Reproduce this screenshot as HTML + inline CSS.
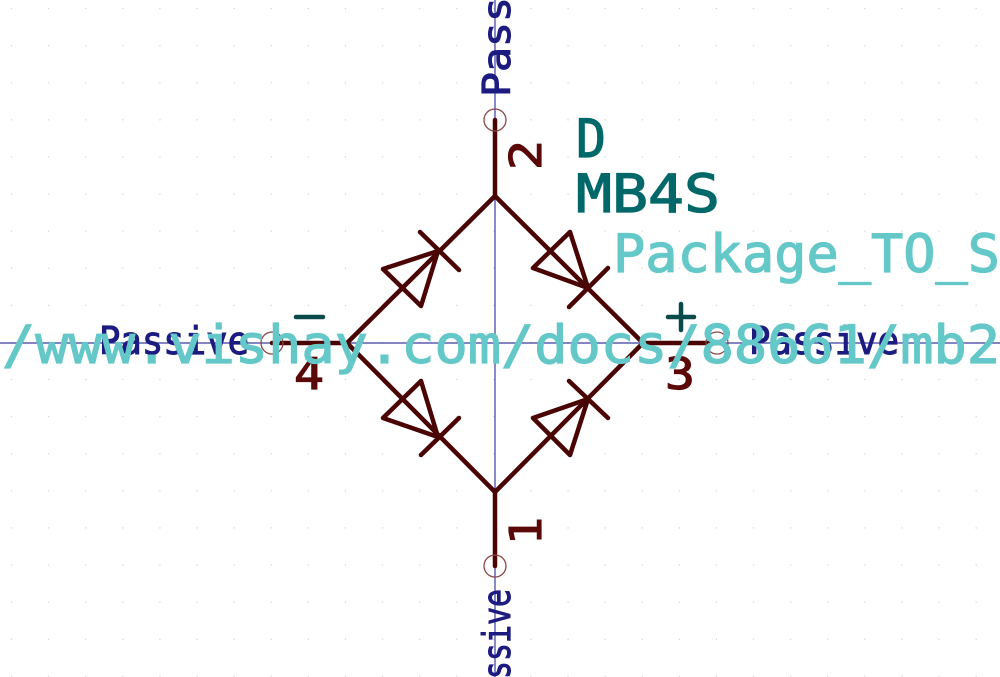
<!DOCTYPE html>
<html><head><meta charset="utf-8"><style>
html,body{margin:0;padding:0;background:#fff;width:1000px;height:677px;overflow:hidden;}
svg{display:block;}
text{font-family:"DejaVu Sans Mono","Liberation Mono",monospace;}
</style></head><body>
<svg width="1000" height="677" viewBox="0 0 1000 677" xmlns="http://www.w3.org/2000/svg">
<defs>
<pattern id="g" x="-25" y="-28" width="37.1" height="37.1" patternUnits="userSpaceOnUse">
<rect x="36" y="36" width="1.6" height="1.6" fill="#c8c8c8"/>
</pattern>
</defs>
<rect width="1000" height="677" fill="#fff"/>
<rect width="1000" height="677" fill="url(#g)"/>
<line x1="0" y1="343" x2="1000" y2="343" stroke="#3c3ca0" stroke-width="1.2"/>
<line x1="495" y1="0" x2="495" y2="677" stroke="#3c3ca0" stroke-width="1.2"/>

<g stroke="#4a0404" stroke-width="4.5" fill="none" stroke-linecap="round" stroke-linejoin="round">
<line x1="495" y1="120" x2="495" y2="196"/>
<line x1="495" y1="492" x2="495" y2="566"/>
<line x1="272" y1="343" x2="347" y2="343"/>
<line x1="643" y1="343" x2="717" y2="343"/>
<polyline points="347,343 495,196 643,343 495,492 347,343"/>
<line x1="420" y1="232" x2="459" y2="270"/>
<polygon points="438,251 383,269 421,306"/>
<line x1="569" y1="307" x2="608" y2="268"/>
<polygon points="588,288 533,268 570,232"/>
<line x1="421" y1="455" x2="459" y2="418"/>
<polygon points="438,437 383,418 421,381"/>
<line x1="569" y1="381" x2="608" y2="418"/>
<polygon points="588,399 533,418 570,455"/>
</g>
<g stroke="#8c4646" stroke-width="1.3" fill="none">
<circle cx="495" cy="120" r="11"/>
<circle cx="495" cy="566" r="11"/>
<circle cx="272" cy="343" r="11"/>
<circle cx="717" cy="343" r="11"/>
</g>
<g fill="#5a0808" stroke="#5a0808" stroke-width="1.2" font-size="44">
<text x="0" y="0" transform="translate(541,170) rotate(-90)" textLength="30" lengthAdjust="spacingAndGlyphs">2</text>
<text x="0" y="0" transform="translate(541,545) rotate(-90)" textLength="28" lengthAdjust="spacingAndGlyphs">1</text>
<text x="294" y="389" textLength="30" lengthAdjust="spacingAndGlyphs">4</text>
<text x="665" y="389" textLength="30" lengthAdjust="spacingAndGlyphs">3</text>
</g>
<g stroke="#0a4a4a" stroke-width="4.5" stroke-linecap="round">
<line x1="296" y1="317" x2="323" y2="317"/>
<line x1="668" y1="317" x2="694" y2="317"/>
<line x1="681" y1="304" x2="681" y2="330"/>
</g>
<g fill="#1c1c80" stroke="#1c1c80" stroke-width="1" font-size="38">
<text x="99" y="354" textLength="150" lengthAdjust="spacingAndGlyphs">Passive</text>
<text x="749" y="354" textLength="150" lengthAdjust="spacingAndGlyphs">Passive</text>
<text x="0" y="0" transform="translate(510,97) rotate(-90)" textLength="100" lengthAdjust="spacingAndGlyphs">Pass</text>
<text x="0" y="0" transform="translate(510,679) rotate(-90)" textLength="90" lengthAdjust="spacingAndGlyphs">ssive</text>
</g>
<g fill="#006868" stroke="#006868" stroke-width="1.2" font-size="53">
<text x="576" y="157" textLength="30" lengthAdjust="spacingAndGlyphs">D</text>
<text x="576" y="212" textLength="144" lengthAdjust="spacingAndGlyphs">MB4S</text>
</g>
<g fill="#64c8c8" stroke="#64c8c8" stroke-width="1.2" font-size="53">
<text x="613" y="272" textLength="387" lengthAdjust="spacingAndGlyphs">Package_TO_S</text>
<text x="2" y="363" textLength="998" lengthAdjust="spacingAndGlyphs">/www.vishay.com/docs/88661/mb2</text>
</g>
</svg>
</body></html>
